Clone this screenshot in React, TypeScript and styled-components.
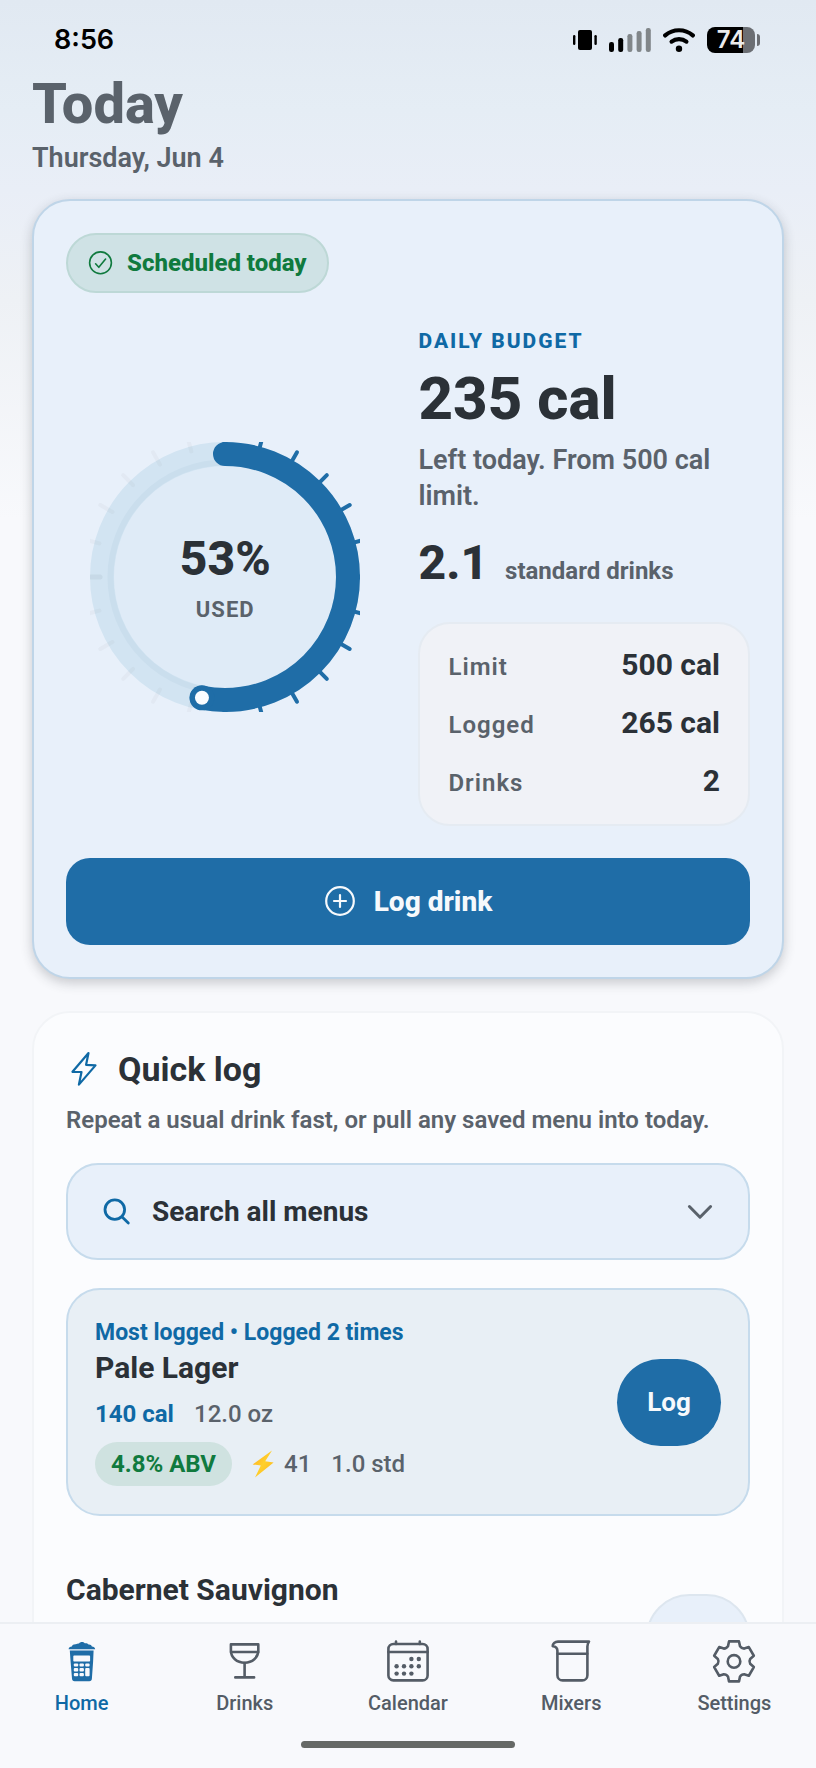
import React from "react";
import styled, { createGlobalStyle } from "styled-components";

const color = {
  blue: "#1f6da7",
  blueText: "#0f69a5",
  ink: "#2b3137",
  gray: "#5a626b",
  green: "#107a3e",
  card: "#e8f0fa",
  line: "#c6dbec",
};

const GlobalStyle = createGlobalStyle`
  * { box-sizing: border-box; }
  body {
    margin: 0;
    background: #f8f9fc;
    font-family: Roboto, "Liberation Sans", sans-serif;
    color: ${color.ink};
    -webkit-font-smoothing: antialiased;
  }
  h1, h2, h3, p, dl, dd, dt, ul { margin: 0; padding: 0; }
  button { font-family: inherit; cursor: pointer; }
  svg { display: block; flex: none; }
`;

const Shell = styled.div`
  height: 100vh;
  display: flex;
  flex-direction: column;
  background: linear-gradient(
    #e1e9f2 0,
    #e5edf5 110px,
    #e9eef7 190px,
    #eef1f5 300px,
    #f8f9fc 520px
  );
`;

const StatusBar = styled.div`
  height: 72px;
  padding: 8px 56px 0 54px;
  display: flex;
  flex: none;
  align-items: center;
  justify-content: space-between;
`;

const Clock = styled.time`
  font: 600 27px/32px Inter, sans-serif;
  color: #000;
`;

const StatusIcons = styled.div`
  display: flex;
  align-items: center;
  gap: 12px;
`;

const Battery = styled.div`
  display: flex;
  align-items: center;
  gap: 2px;

  &::after {
    content: "";
    width: 3px;
    height: 12px;
    border-radius: 0 3px 3px 0;
    background: #6b6e73;
  }
`;

const BatteryBody = styled.span<{ $level: number }>`
  width: 48px;
  height: 26px;
  border-radius: 8px;
  text-align: center;
  font: 600 24px/26px Inter, sans-serif;
  color: #ececec;
  background: linear-gradient(
    90deg,
    #000 ${(p) => p.$level}%,
    #6b6e73 ${(p) => p.$level}%
  );
`;

const Main = styled.main`
  flex: 1;
  min-height: 0;
  overflow-y: auto;
  scrollbar-width: none;
  padding: 0 32px 32px;
  display: flex;
  flex-direction: column;
`;

const Header = styled.header`
  padding-bottom: 24px;
`;

const Title = styled.h1`
  font-size: 56px;
  line-height: 64px;
  font-weight: 800;
  color: ${color.gray};
`;

const DateLine = styled.p`
  margin-top: 5px;
  font-size: 27px;
  line-height: 34px;
  font-weight: 600;
  color: ${color.gray};
`;

const Card = styled.section<{ $raised?: boolean }>`
  flex: none;
  padding: ${(p) => (p.$raised ? "32px" : "34px 32px 32px")};
  border-radius: 38px;
  border: 2px solid ${(p) => (p.$raised ? "#bfd5e8" : "#f2f4f7")};
  background: ${(p) => (p.$raised ? color.card : "#fbfcfe")};
  box-shadow: ${(p) => (p.$raised ? "0 4px 12px rgba(45, 50, 60, 0.24)" : "none")};

  & + & {
    margin-top: 32px;
  }
`;

const StatusPill = styled.div`
  display: inline-flex;
  align-items: center;
  height: 60px;
  gap: 14px;
  padding: 0 20px;
  border: 2px solid #bdd8d6;
  border-radius: 30px;
  background: #cfe2e5;
  color: ${color.green};
  font-size: 24px;
  line-height: 32px;
  font-weight: 800;
`;

const Overview = styled.div`
  display: grid;
  grid-template-columns: 318fr 331fr;
  column-gap: 34px;
  align-items: center;
  margin: 34px 0 32px;
`;

const Gauge = styled.div`
  display: grid;
  place-items: center;

  & > * {
    grid-area: 1 / 1;
  }
`;

const GaugeText = styled.div`
  text-align: center;
  font-size: 48px;
  line-height: 58px;
  font-weight: 800;
`;

const GaugeCaption = styled.div`
  margin-top: 8px;
  font-size: 22px;
  line-height: 28px;
  font-weight: 700;
  letter-spacing: 1px;
  color: ${color.gray};
`;

const Eyebrow = styled.h2`
  font-size: 21px;
  line-height: 28px;
  font-weight: 800;
  letter-spacing: 2px;
  color: ${color.blueText};
`;

const BigValue = styled.p`
  margin-top: 8px;
  font-size: 60px;
  line-height: 72px;
  font-weight: 800;
`;

const Hint = styled.p`
  margin-top: 7px;
  font-size: 27px;
  line-height: 36px;
  font-weight: 600;
  color: ${color.gray};
`;

const DrinkCount = styled.p`
  display: flex;
  align-items: baseline;
  gap: 17px;
  margin-top: 20px;
  font-size: 24px;
  line-height: 58px;
  font-weight: 700;
  color: ${color.gray};

  strong {
    font-size: 48px;
    font-weight: 800;
    color: ${color.ink};
  }
`;

const Stats = styled.dl`
  display: flex;
  flex-direction: column;
  gap: 20px;
  margin-top: 22px;
  padding: 23px 28px;
  border: 2px solid #e5ebf2;
  border-radius: 32px;
  background: #f0f2f7;
`;

const Stat = styled.div`
  display: flex;
  justify-content: space-between;
  align-items: baseline;
  line-height: 36px;

  dt {
    font-size: 24px;
    font-weight: 600;
    letter-spacing: 1px;
    color: ${color.gray};
  }

  dd {
    font-size: 30px;
    font-weight: 700;
  }
`;

const PrimaryButton = styled.button`
  width: 100%;
  height: 87px;
  display: flex;
  align-items: center;
  justify-content: center;
  gap: 18px;
  border: 0;
  border-radius: 24px;
  background: ${color.blue};
  color: #f6f9fc;
  font-size: 28px;
  font-weight: 800;
`;

const SectionTitle = styled.h2`
  display: flex;
  align-items: center;
  gap: 17px;
  font-size: 34px;
  line-height: 44px;
  font-weight: 700;
`;

const SectionHint = styled.p`
  margin-top: 12px;
  font-size: 24px;
  line-height: 34px;
  font-weight: 600;
  color: ${color.gray};
`;

const MenuPicker = styled.button`
  width: 100%;
  height: 97px;
  margin-top: 26px;
  padding: 0 34px;
  display: flex;
  align-items: center;
  gap: 20px;
  border: 2px solid ${color.line};
  border-radius: 32px;
  background: ${color.card};
  color: ${color.ink};
  font-size: 28px;
  font-weight: 700;
  text-align: left;

  span {
    flex: 1;
  }
`;

const DrinkList = styled.ul`
  list-style: none;
  margin-top: 28px;
  display: flex;
  flex-direction: column;
  gap: 28px;
`;

const DrinkRow = styled.li<{ $featured?: boolean }>`
  display: flex;
  align-items: center;
  justify-content: space-between;
  padding: ${(p) => (p.$featured ? "28px 27px" : "28px 0")};
  border: ${(p) => (p.$featured ? `2px solid ${color.line}` : "0")};
  border-radius: 34px;
  background: ${(p) => (p.$featured ? "#e8eff5" : "transparent")};
`;

const DrinkInfo = styled.div`
  min-height: 131px;
`;

const Badge = styled.p`
  margin-bottom: 2px;
  font-size: 23px;
  line-height: 30px;
  font-weight: 700;
  color: ${color.blueText};
`;

const DrinkName = styled.h3`
  font-size: 30px;
  line-height: 36px;
  font-weight: 700;
`;

const Facts = styled.div`
  display: flex;
  align-items: center;
  gap: 20px;
  margin-top: 12px;
  font-size: 24px;
  line-height: 32px;
  font-weight: 500;
  color: ${color.gray};

  strong {
    font-weight: 700;
    color: ${color.blueText};
  }
`;

const Abv = styled.span`
  padding: 6px 16px;
  border-radius: 22px;
  background: #cfe2e0;
  color: ${color.green};
  font-weight: 700;
`;

const Boost = styled.span`
  display: flex;
  align-items: center;
  gap: 10px;
`;

const LogButton = styled.button<{ $quiet?: boolean }>`
  width: 104px;
  height: 87px;
  border: ${(p) => (p.$quiet ? "2px solid #dde6ef" : "0")};
  border-radius: 44px;
  background: ${(p) => (p.$quiet ? color.card : color.blue)};
  color: #f6f9fc;
  font-size: 26px;
  font-weight: 700;
`;

const TabBar = styled.nav`
  flex: none;
  display: grid;
  grid-template-columns: repeat(5, 1fr);
  padding: 16px 0 20px;
  border-top: 2px solid #eceff3;
  background: #f8f9fc;
`;

const Tab = styled.a<{ $active?: boolean }>`
  display: flex;
  flex-direction: column;
  align-items: center;
  gap: 6px;
  color: ${(p) => (p.$active ? color.blueText : "#545c66")};
  font-size: 20px;
  line-height: 26px;
  font-weight: 500;
  text-decoration: none;
`;

const HomeIndicator = styled.div`
  grid-column: 1 / -1;
  justify-self: center;
  width: 214px;
  height: 7px;
  margin-top: 25px;
  border-radius: 4px;
  background: #666966;
`;

const stroke = {
  fill: "none",
  stroke: "currentColor",
  strokeLinecap: "round" as const,
  strokeLinejoin: "round" as const,
};

function VibrateIcon() {
  return (
    <svg width="24" height="20" viewBox="0 0 24 20" aria-hidden="true">
      <rect x="5" y="0" width="14" height="20" rx="2" />
      <rect x="0" y="5" width="2.4" height="10" rx="1.2" />
      <rect x="21.4" y="5" width="2.4" height="10" rx="1.2" />
    </svg>
  );
}

function SignalIcon() {
  return (
    <svg width="42" height="24" viewBox="0 0 42 24" aria-hidden="true">
      {[10, 14, 18, 21, 24].map((h, i) => (
        <rect
          key={h}
          x={i * 9.2}
          y={24 - h}
          width="5"
          height={h}
          rx="2.2"
          fill={i < 2 ? "#000" : "#818689"}
        />
      ))}
    </svg>
  );
}

function WifiIcon() {
  return (
    <svg width="32" height="24" viewBox="0 0 32 24" aria-hidden="true" color="#000">
      <path d="M2.2 7.4C10 .5 22 .5 29.8 7.4" {...stroke} strokeWidth="4.2" />
      <path d="M8.6 13.6C13 10.2 19 10.2 23.4 13.6" {...stroke} strokeWidth="4.2" />
      <circle cx="16" cy="20.8" r="3.2" />
    </svg>
  );
}

function CheckCircleIcon() {
  return (
    <svg width="25" height="25" viewBox="0 0 25 25" aria-hidden="true">
      <g {...stroke} strokeWidth="1.6">
        <circle cx="12.5" cy="11.8" r="10.9" />
        <path d="M7.6 12.8l3.2 3.5 6.8-8.2" />
      </g>
    </svg>
  );
}

function PlusCircleIcon() {
  return (
    <svg width="32" height="32" viewBox="0 0 32 32" aria-hidden="true">
      <g {...stroke} strokeWidth="2.2">
        <circle cx="16" cy="15" r="13.8" />
        <path d="M16 9v12M10 15h12" />
      </g>
    </svg>
  );
}

function BoltIcon() {
  return (
    <svg width="35" height="36" viewBox="0 0 35 36" aria-hidden="true" color={color.blueText}>
      <path d="M22.5 2L6.5 20.8l9 .2-2.6 12.6L29.5 14.4l-9.4-.6z" {...stroke} strokeWidth="2.2" />
    </svg>
  );
}

function SearchIcon() {
  return (
    <svg width="30" height="30" viewBox="0 0 30 30" aria-hidden="true" color={color.blueText}>
      <g {...stroke} strokeWidth="2.8">
        <circle cx="12.8" cy="12.6" r="9.8" />
        <path d="M19.9 19.8l6.4 6.2" />
      </g>
    </svg>
  );
}

function ChevronIcon() {
  return (
    <svg width="28" height="28" viewBox="0 0 28 28" aria-hidden="true" color={color.gray}>
      <path d="M3.4 8.5L14 19.2 24.6 8.5" {...stroke} strokeWidth="3" />
    </svg>
  );
}

function SparkIcon() {
  return (
    <svg width="22" height="28" viewBox="0 0 22 28" aria-hidden="true">
      <defs>
        <linearGradient id="spark" x1="0" y1="0" x2="1" y2="1">
          <stop offset="0" stopColor="#ffa61f" />
          <stop offset="0.5" stopColor="#ffd02c" />
          <stop offset="1" stopColor="#fbb01a" />
        </linearGradient>
      </defs>
      <path d="M20 .6L.6 14.4l8.2 1.2L3 27.4l18.6-14.8-8.4-1.4z" fill="url(#spark)" />
    </svg>
  );
}

function CupIcon() {
  return (
    <svg width="44" height="44" viewBox="0 0 44 44" aria-hidden="true" fill={color.blue}>
      <path d="M8.6 9.2c.2-1.6 1.4-2.6 3.2-2.7.6-1.7 2-2.5 4-2.3C17 3.6 18 3.4 19 3.5c1-1.8 4.4-2.1 5.8-.2 1.7-.2 3 .3 3.7 1.3 1.8-.2 3 .6 3.4 1.9 1.8.1 3 1.1 3.3 2.7z" />
      <path d="M9.8 10.4h23.8l-.5 11.4-1.2 16.8c-.1 1.8-1 2.6-2.6 2.6H14.6c-1.6 0-2.5-.8-2.6-2.6L10.6 21.8z" />
      <g fill="#f8f9fc">
        <rect x="13.3" y="15.6" width="16.8" height="6" rx=".8" />
        <rect x="13.8" y="23.4" width="4.4" height="3" rx="1" />
        <rect x="19.5" y="23.4" width="4.4" height="3" rx="1" />
        <rect x="25.2" y="23.4" width="4.4" height="3" rx="1" />
        <rect x="13.8" y="28" width="4.4" height="3.4" rx="1" />
        <rect x="19.5" y="28" width="4.4" height="3.4" rx="1" />
        <rect x="25.2" y="28" width="4.4" height="8.2" rx="1" />
        <rect x="13.8" y="33" width="4.4" height="3.2" rx="1" />
        <rect x="19.5" y="33" width="4.4" height="3.2" rx="1" />
      </g>
    </svg>
  );
}

function GlassIcon() {
  return (
    <svg width="44" height="44" viewBox="0 0 44 44" aria-hidden="true">
      <g {...stroke} strokeWidth="2.6">
        <path d="M7.9 4.4h27.4v6.2c0 7-6 12.2-13.7 12.2S7.9 17.6 7.9 10.6z" />
        <path d="M8 12h27.2M21.6 23v14.4M12.3 37.4h18.8" />
      </g>
    </svg>
  );
}

function CalendarIcon() {
  const rows: [number, number[]][] = [
    [19, [25.4, 32.8]],
    [26.2, [10.6, 18, 25.4, 32.8]],
    [33.6, [10.6, 18, 25.4]],
  ];
  return (
    <svg width="44" height="44" viewBox="0 0 44 44" aria-hidden="true">
      <g {...stroke} strokeWidth="2.6">
        <rect x="2.4" y="4" width="39.2" height="36.4" rx="5" />
        <path d="M2.4 12h39.2M10 1.5V4M33.8 1.5V4" />
      </g>
      {rows.map(([y, xs]) =>
        xs.map((x) => <circle key={`${x}-${y}`} cx={x} cy={y} r="2.2" fill="currentColor" />)
      )}
    </svg>
  );
}

function BeakerIcon() {
  return (
    <svg width="44" height="44" viewBox="0 0 44 44" aria-hidden="true">
      <g {...stroke} strokeWidth="2.6">
        <path d="M40 1.6H9C6 1.6 3.5 3.5 3.7 6.2c3 .2 4.7 1.8 4.7 4.6v24.4a5.2 5.2 0 0 0 5.2 5.2h19.6a5.2 5.2 0 0 0 5.2-5.2V6.6c0-1.8.3-3.2 1.6-5z" />
        <path d="M8.6 13.8h29.6" />
      </g>
    </svg>
  );
}

function GearIcon() {
  const at = (x: number, y: number, deg: number) => {
    const a = (deg * Math.PI) / 180;
    const px = 22 + x * Math.cos(a) - y * Math.sin(a);
    const py = 21.4 + x * Math.sin(a) + y * Math.cos(a);
    return `${px.toFixed(2)} ${py.toFixed(2)}`;
  };
  const teeth = [0, 60, 120, 180, 240, 300].map(
    (deg, i) =>
      `${i ? "L" : "M"}${at(-5, -20, deg)} L${at(5, -20, deg)} L${at(6, -15.2, deg)} ` +
      `Q${at(7.4, -12.8, deg)} ${at(10.2, -12.8, deg)}`
  );
  return (
    <svg width="44" height="44" viewBox="0 0 44 44" aria-hidden="true">
      <g {...stroke} strokeWidth="2.6">
        <path d={teeth.join(" ") + " Z"} />
        <circle cx="22" cy="21.4" r="6.3" />
      </g>
    </svg>
  );
}

function Ring({ value }: { value: number }) {
  const c = 135;
  const r = 123;
  const length = 2 * Math.PI * r;
  const end = value * 2 * Math.PI;
  const ticks = Array.from({ length: 24 }, (_, i) => i);
  return (
    <svg width="270" height="270" viewBox="0 0 270 270" aria-hidden="true">
      <circle cx={c} cy={c} r={r} fill="#dfebf7" stroke="#d2e4f2" strokeWidth="24" />
      <circle cx={c} cy={c} r="114.5" fill="none" stroke="#cadeed" strokeWidth="6" />
      {ticks.map((i) => {
        const major = i % 6 === 0;
        const done = i / 24 < value;
        return (
          <line
            key={i}
            x1={c}
            x2={c}
            y1={major ? 10 : 5}
            y2={-9}
            transform={`rotate(${i * 15} ${c} ${c})`}
            stroke={done ? color.blue : major ? "rgba(90,110,125,.09)" : "rgba(110,110,120,.05)"}
            strokeWidth={major ? 5 : 4}
            strokeLinecap="round"
          />
        );
      })}
      <circle
        cx={c}
        cy={c}
        r={r}
        fill="none"
        stroke={color.blue}
        strokeWidth="24"
        strokeLinecap="round"
        strokeDasharray={`${length * value} ${length}`}
        transform={`rotate(-90 ${c} ${c})`}
      />
      <g transform={`translate(${c + r * Math.sin(end)} ${c - r * Math.cos(end)})`}>
        <circle r="12.5" fill={color.blue} />
        <circle r="7" fill="#fafcff" />
      </g>
    </svg>
  );
}

const stats = [
  { label: "Limit", value: "500 cal" },
  { label: "Logged", value: "265 cal" },
  { label: "Drinks", value: "2" },
];

const tabs = [
  { label: "Home", Icon: CupIcon },
  { label: "Drinks", Icon: GlassIcon },
  { label: "Calendar", Icon: CalendarIcon },
  { label: "Mixers", Icon: BeakerIcon },
  { label: "Settings", Icon: GearIcon },
];

export default function App() {
  return (
    <Shell>
      <GlobalStyle />
      <StatusBar>
        <Clock>8:56</Clock>
        <StatusIcons>
          <VibrateIcon />
          <SignalIcon />
          <WifiIcon />
          <Battery>
            <BatteryBody $level={74}>74</BatteryBody>
          </Battery>
        </StatusIcons>
      </StatusBar>

      <Main>
        <Header>
          <Title>Today</Title>
          <DateLine>Thursday, Jun 4</DateLine>
        </Header>

        <Card $raised>
          <StatusPill>
            <CheckCircleIcon />
            Scheduled today
          </StatusPill>
          <Overview>
            <Gauge>
              <Ring value={0.53} />
              <GaugeText>
                53%
                <GaugeCaption>USED</GaugeCaption>
              </GaugeText>
            </Gauge>
            <div>
              <Eyebrow>DAILY BUDGET</Eyebrow>
              <BigValue>235 cal</BigValue>
              <Hint>Left today. From 500 cal limit.</Hint>
              <DrinkCount>
                <strong>2.1</strong>
                standard drinks
              </DrinkCount>
              <Stats>
                {stats.map((s) => (
                  <Stat key={s.label}>
                    <dt>{s.label}</dt>
                    <dd>{s.value}</dd>
                  </Stat>
                ))}
              </Stats>
            </div>
          </Overview>
          <PrimaryButton type="button">
            <PlusCircleIcon />
            Log drink
          </PrimaryButton>
        </Card>

        <Card>
          <SectionTitle>
            <BoltIcon />
            Quick log
          </SectionTitle>
          <SectionHint>Repeat a usual drink fast, or pull any saved menu into today.</SectionHint>
          <MenuPicker type="button" aria-expanded="false">
            <SearchIcon />
            <span>Search all menus</span>
            <ChevronIcon />
          </MenuPicker>
          <DrinkList>
            <DrinkRow $featured>
              <DrinkInfo>
                <Badge>Most logged • Logged 2 times</Badge>
                <DrinkName>Pale Lager</DrinkName>
                <Facts>
                  <strong>140 cal</strong>
                  <span>12.0 oz</span>
                </Facts>
                <Facts>
                  <Abv>4.8% ABV</Abv>
                  <Boost>
                    <SparkIcon />
                    41
                  </Boost>
                  <span>1.0 std</span>
                </Facts>
              </DrinkInfo>
              <LogButton type="button">Log</LogButton>
            </DrinkRow>
            <DrinkRow>
              <DrinkInfo>
                <DrinkName>Cabernet Sauvignon</DrinkName>
              </DrinkInfo>
              <LogButton type="button" $quiet aria-label="Log Cabernet Sauvignon" />
            </DrinkRow>
          </DrinkList>
        </Card>
      </Main>

      <TabBar>
        {tabs.map(({ label, Icon }, i) => (
          <Tab key={label} href={`#${label.toLowerCase()}`} $active={i === 0}>
            <Icon />
            {label}
          </Tab>
        ))}
        <HomeIndicator />
      </TabBar>
    </Shell>
  );
}
